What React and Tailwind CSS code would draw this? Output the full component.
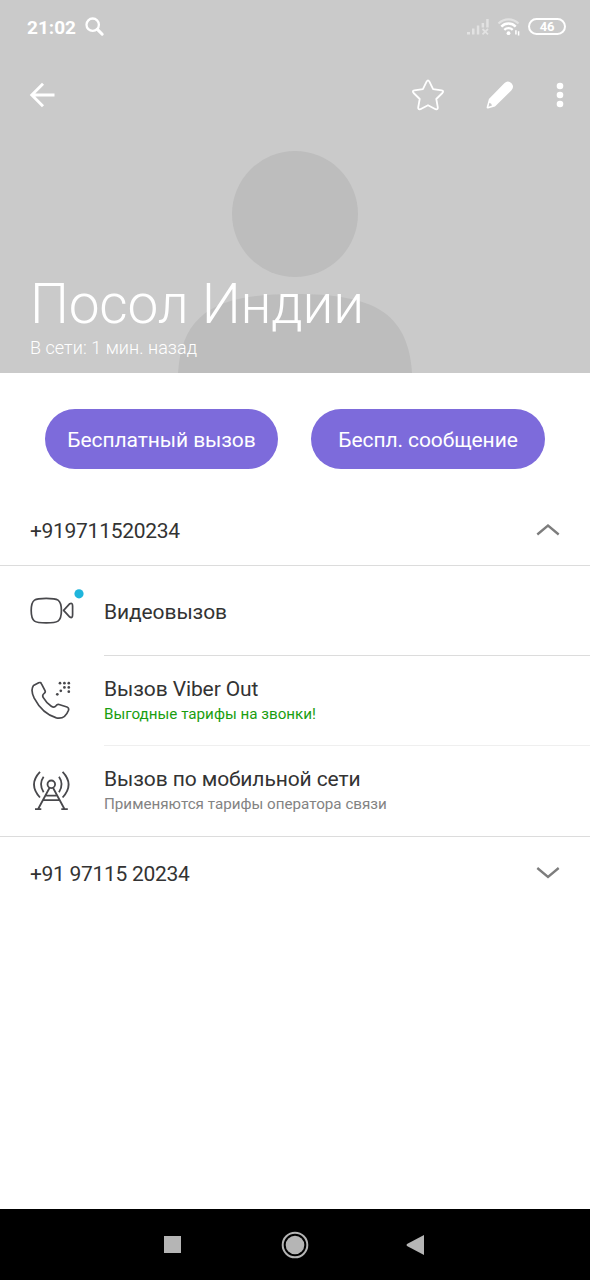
import { useState } from 'react';

function StatusBar() {
  return (
    <div className="flex h-[53px] items-center justify-between pl-[27px] pr-[24px]">
      <div className="flex items-center">
        <span className="pt-px text-[19px] font-bold leading-none">21:02</span>
        <svg className="ml-[9px] h-[20px] w-[20px]" viewBox="0 0 20 20" fill="none" stroke="currentColor">
          <circle cx="7.7" cy="7.7" r="6.2" strokeWidth="2.3" />
          <path d="M12.4 12.4 L17.2 17.2" strokeWidth="3" strokeLinecap="round" />
        </svg>
      </div>
      <div className="flex items-center">
        <svg className="h-[18px] w-[24px] opacity-45" viewBox="0 0 24 18" fill="currentColor">
          <rect x="1" y="14" width="3" height="2.5" />
          <rect x="6" y="10.5" width="2.5" height="6" />
          <rect x="10.8" y="7.5" width="2.5" height="9" />
          <rect x="15.6" y="5" width="2.5" height="4.5" />
          <rect x="20.2" y="1" width="2.5" height="8.5" />
          <path d="M16.5 11 L22 16.3 M22 11 L16.5 16.3" stroke="currentColor" strokeWidth="1.8" />
        </svg>
        <svg className="ml-[7px] h-[20px] w-[24px]" viewBox="0 0 24 20" fill="none" stroke="currentColor">
          <path d="M1.5 6.5 A14 14 0 0 1 21.5 6.5" strokeWidth="2.2" opacity="0.45" />
          <path d="M4.3 9.6 A10 10 0 0 1 18.7 9.6" strokeWidth="2.4" />
          <path d="M7.3 12.9 A6 6 0 0 1 15.7 12.9" strokeWidth="2.3" />
          <circle cx="11.5" cy="16.2" r="1.9" fill="currentColor" stroke="none" />
          <path d="M18.9 13.2 V17.6 M21.6 14.2 V18.6" strokeWidth="1.5" />
        </svg>
        <span className="ml-[7px] flex h-[17px] w-[38px] items-center justify-center rounded-full border-2 border-white text-[13px] font-bold leading-none tracking-[-0.3px]">
          46
        </span>
      </div>
    </div>
  );
}

function Toolbar() {
  return (
    <div className="flex h-[84px] items-center pl-[29px] pr-[26px]">
      <button type="button" aria-label="Назад">
        <svg className="h-[26px] w-[27px]" viewBox="0 0 27 26" fill="none" stroke="currentColor" strokeWidth="2.9">
          <path d="M25.5 13 H3 M14 1.8 L2.8 13 L14 24.2" />
        </svg>
      </button>
      <button type="button" className="ml-auto" aria-label="Избранное">
        <svg className="h-[32px] w-[34px]" viewBox="0 0 34 32" fill="none" stroke="currentColor" strokeWidth="1.8" strokeLinejoin="round">
          <path d="M15.6 2.6 Q17 .2 18.4 2.6 L22.1 10.2 L30.6 11.4 Q33.2 12 31.4 14 L25.3 20 L26.8 28.4 Q27 31 24.6 30.2 L17 26.2 L9.4 30.2 Q7 31 7.2 28.4 L8.7 20 L2.6 14 Q.8 12 3.4 11.4 L11.9 10.2 Z" />
        </svg>
      </button>
      <button type="button" className="ml-[41px]" aria-label="Изменить">
        <svg className="h-[30px] w-[28px]" viewBox="0 0 28 30" fill="currentColor">
          <path fillRule="evenodd" d="M18.3 3.2 Q21.8 -.1 25.5 3.2 Q28.7 6.8 25.3 10.4 L9 26.5 L2 28.5 Q.3 28.7 .7 27 L2.9 19 Z M3.4 22.8 L2.5 26.7 L6 25.6 Q5.6 23.4 3.4 22.8 Z" />
        </svg>
      </button>
      <button type="button" className="ml-[42px]" aria-label="Ещё">
        <svg className="h-[26px] w-[8px]" viewBox="0 0 8 26" fill="currentColor">
          <circle cx="4" cy="4" r="3.3" />
          <circle cx="4" cy="13" r="3.3" />
          <circle cx="4" cy="22" r="3.3" />
        </svg>
      </button>
    </div>
  );
}

function VideoIcon() {
  return (
    <svg className="h-[44px] w-[56px]" viewBox="0 0 56 44" fill="none" stroke="#48484c" strokeWidth="1.7" strokeLinejoin="round">
      <path d="M16.2 10.3 C27.5 10.3 31.4 11 31.4 22.6 C31.4 34.2 27.5 34.9 16.2 34.9 C5 34.9 1.2 34.2 1.2 22.6 C1.2 11 5 10.3 16.2 10.3 Z" />
      <path d="M33.6 22.4 L39.8 15.7 Q42.6 14.3 42.6 18 V26.8 Q42.6 30.6 39.8 29.1 Z" />
      <circle cx="49" cy="5.8" r="4.6" fill="#1fb5dc" stroke="none" />
    </svg>
  );
}

function ViberOutIcon() {
  return (
    <svg className="h-[44px] w-[44px]" viewBox="0 0 44 44" fill="none" stroke="#48484c" strokeWidth="1.7" strokeLinejoin="round">
      <path d="M3.5 7.5 L8.7 4.8 Q10.6 3.9 11.5 5.8 L15 12.6 Q15.8 14.3 14.2 15.4 Q11.8 17 13.3 19.7 Q16.2 24.8 21.3 28.3 Q24.2 30.3 26 27.8 Q27.2 26 29 26.5 L37 29 Q39.2 29.9 38.5 32.2 Q35 41.6 26.4 39.9 Q12.5 36 4.2 20.2 Q.2 12 3.5 7.5 Z" />
      <g fill="#48484c" stroke="none">
        <circle cx="30" cy="5.2" r="1.35" />
        <circle cx="34.4" cy="5.2" r="1.35" />
        <circle cx="38.8" cy="5.2" r="1.35" />
        <circle cx="34.4" cy="9.4" r="1.35" />
        <circle cx="38.8" cy="9.4" r="1.35" />
        <circle cx="30.8" cy="12.8" r="1.35" />
        <circle cx="38.8" cy="13.7" r="1.35" />
        <circle cx="27.3" cy="16.3" r="1.35" />
      </g>
    </svg>
  );
}

function AntennaIcon() {
  return (
    <svg className="h-[44px] w-[44px]" viewBox="0 0 44 44" fill="none" stroke="#48484c" strokeWidth="1.8">
      <circle cx="21.3" cy="16.3" r="3.8" />
      <path d="M19.6 19.7 L8 41.2 M23 19.7 L34.6 41.2 M5 41.2 H11.3 M31.3 41.2 H37.8 M16.2 27.7 H26.4 M13.6 32.2 H29" />
      <path d="M13.6 8.8 Q8.4 16.3 13.6 24.2 M29 8.8 Q34.2 16.3 29 24.2" />
      <path d="M10 3.8 Q-2 16.3 10 29.5 M32.6 3.8 Q44.6 16.3 32.6 29.5" />
    </svg>
  );
}

function Chevron({ up }) {
  return (
    <svg className="h-[14px] w-[24px]" viewBox="0 0 24 14" fill="none" stroke="#7d7d7d" strokeWidth="2.3">
      <path d={up ? 'M1.3 10.5 L12 1.5 L22.7 10.5' : 'M1.3 2 L12 11 L22.7 2'} />
    </svg>
  );
}

function CallOption({ icon, title, note, noteClass, border }) {
  return (
    <button type="button" className="flex h-[90px] w-full items-stretch pl-[30px] text-left">
      <span className="flex w-[74px] shrink-0 items-center pb-[2px]">{icon}</span>
      <span className={`flex flex-1 flex-col justify-center ${border}`}>
        <span className={`text-[21px] leading-[26px] tracking-[-0.1px] ${note ? '' : 'pt-[2px]'}`}>{title}</span>
        {note && <span className={`text-[15.2px] leading-[24px] ${noteClass}`}>{note}</span>}
      </span>
    </button>
  );
}

function App() {
  const [open, setOpen] = useState(true);

  return (
    <div className="flex h-[1280px] w-[590px] flex-col bg-white font-['Roboto',sans-serif] text-[#333333]">
      <header className="relative h-[373px] shrink-0 overflow-hidden bg-[#cacaca] text-white">
        <svg className="absolute left-[177px] top-[151px] h-[222px] w-[236px]" viewBox="0 0 236 222" fill="#bdbdbd">
          <circle cx="118" cy="63" r="63" />
          <path d="M1 222 C5 160 42 143 118 143 C194 143 231 160 235 222 Z" />
        </svg>
        <div className="relative flex h-full flex-col">
          <StatusBar />
          <Toolbar />
          <div className="mt-auto pb-[13px] pl-[30px]">
            <h1 className="text-[55px] font-light leading-[64px] tracking-[-0.2px]">Посол Индии</h1>
            <p className="text-[18px] font-light leading-[24px] tracking-[0.05px]">В сети: 1 мин. назад</p>
          </div>
        </div>
      </header>

      <main className="flex-1">
        <div className="flex justify-between px-[45px] pt-9 text-[21px] tracking-[-0.08px] text-white">
          <button type="button" className="h-[60px] w-[233px] rounded-full bg-[#7d6bdb] pt-[3px]">Бесплатный вызов</button>
          <button type="button" className="h-[60px] w-[234px] rounded-full bg-[#7d6bdb] pt-[3px]">Беспл. сообщение</button>
        </div>

        <button
          type="button"
          onClick={() => setOpen(!open)}
          className="mt-[27px] flex h-[70px] w-full items-center justify-between border-b border-[#dcdcdc] pl-[30px] pr-[30px]"
        >
          <span className="pt-[2px] text-[21px] tracking-[-0.3px]">+919711520234</span>
          <Chevron up={open} />
        </button>

        {open && (
          <div className="border-b border-[#dcdcdc]">
            <CallOption icon={<VideoIcon />} title="Видеовызов" border="border-b border-[#dcdcdc]" />
            <CallOption
              icon={<ViberOutIcon />}
              title="Вызов Viber Out"
              note="Выгодные тарифы на звонки!"
              noteClass="text-[#1a9e10]"
              border="border-b border-[#efefef]"
            />
            <CallOption
              icon={<AntennaIcon />}
              title="Вызов по мобильной сети"
              note="Применяются тарифы оператора связи"
              noteClass="text-[#838383]"
              border=""
            />
          </div>
        )}

        <button type="button" className="flex h-[72px] w-full items-center justify-between pl-[30px] pr-[30px]">
          <span className="pt-[3px] text-[21px] tracking-[-0.3px]">+91 97115 20234</span>
          <Chevron />
        </button>
      </main>

      <nav className="flex h-[71px] shrink-0 items-center justify-between bg-black pl-[164px] pr-[166px]">
        <span className="h-[17px] w-[17px] bg-[#b5b5b5]" />
        <svg className="ml-[3px] h-[28px] w-[28px]" viewBox="0 0 28 28">
          <circle cx="14" cy="14" r="12.3" fill="none" stroke="#b5b5b5" strokeWidth="2" />
          <circle cx="14" cy="14" r="9.3" fill="#b5b5b5" />
        </svg>
        <svg className="h-[20px] w-[18px]" viewBox="0 0 18 20" fill="#b5b5b5">
          <path d="M18 0 V20 L1 11 Q0 10 1 9 Z" />
        </svg>
      </nav>
    </div>
  );
}

export default App;
